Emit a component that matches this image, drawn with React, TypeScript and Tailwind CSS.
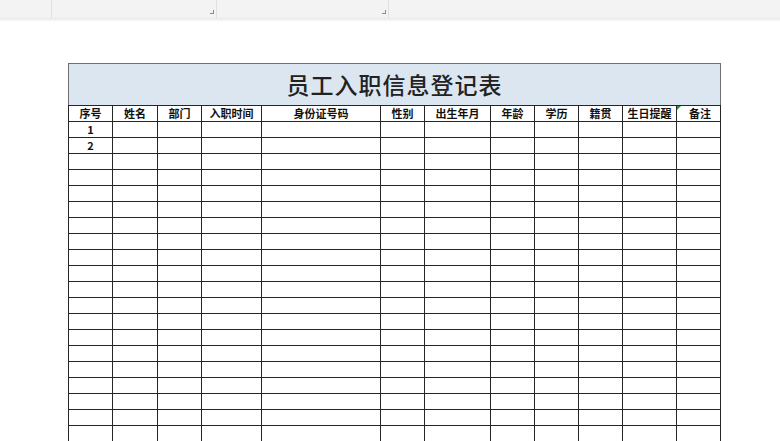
const headers = ['序号', '姓名', '部门', '入职时间', '身份证号码', '性别', '出生年月', '年龄', '学历', '籍贯', '生日提醒', '备注'];

const rowCount = 20;

function Cell({ children }: { children?: React.ReactNode }) {
  return (
    <div className="flex h-[16px] items-center justify-center border-b border-r border-[#262626] text-[11px] font-bold leading-none text-[#111]">
      {children}
    </div>
  );
}

export default function App() {
  const rows = Array.from({ length: rowCount }, (_, i) => i);

  return (
    <div
      className="h-[441px] w-[780px] overflow-hidden bg-white"
      style={{ fontFamily: '"Noto Sans CJK SC", "Noto Sans", sans-serif' }}
    >
      {/* ribbon strip */}
      <div className="flex h-[18px] bg-[#f3f3f3]">
        <div className="w-[52px] border-r border-[#e0e0e0]" />
        <div className="relative w-[165px] border-r border-[#e0e0e0]">
          <span className="absolute bottom-[4px] right-[2px] h-[4px] w-[4px] border-b border-r border-[#8a8a8a]" />
        </div>
        <div className="relative w-[172px] border-r border-[#e0e0e0]">
          <span className="absolute bottom-[4px] right-[2px] h-[4px] w-[4px] border-b border-r border-[#8a8a8a]" />
        </div>
        <div className="flex-1" />
      </div>
      <div className="h-[4px] bg-gradient-to-b from-[#e8e8e8] to-white" />

      <div className="ml-[68px] mt-[41px] w-[653px]">
        {/* title */}
        <div className="flex h-[42px] items-center justify-center border-x border-t border-[#6f6f6f] bg-[#dce6f1]">
          <span className="text-[23px] font-medium tracking-[1px] text-[#222]">员工入职信息登记表</span>
        </div>

        <div className="grid grid-cols-[44px_45px_44px_60px_119px_44px_66px_44px_44px_44px_54px_44px] border-l border-t border-[#262626]">
          {headers.map((h, i) => (
            <div
              key={h}
              className={[
                'relative flex h-[16px] items-center border-b border-r border-[#262626] text-[11px] font-bold leading-none text-[#111]',
                i === 11 ? 'justify-end pr-[9px]' : 'justify-center'
              ].join(' ')}
            >
              {i === 11 ? (
                <span className="absolute left-0 top-0 h-0 w-0 border-r-[4px] border-t-[4px] border-r-transparent border-t-[#1f9a3a]" />
              ) : null}
              {h}
            </div>
          ))}
          {rows.map((r) =>
            headers.map((h, c) => (
              <Cell key={`${r}-${h}`}>{c === 0 && r < 2 ? r + 1 : null}</Cell>
            ))
          )}
        </div>
      </div>
    </div>
  );
}
